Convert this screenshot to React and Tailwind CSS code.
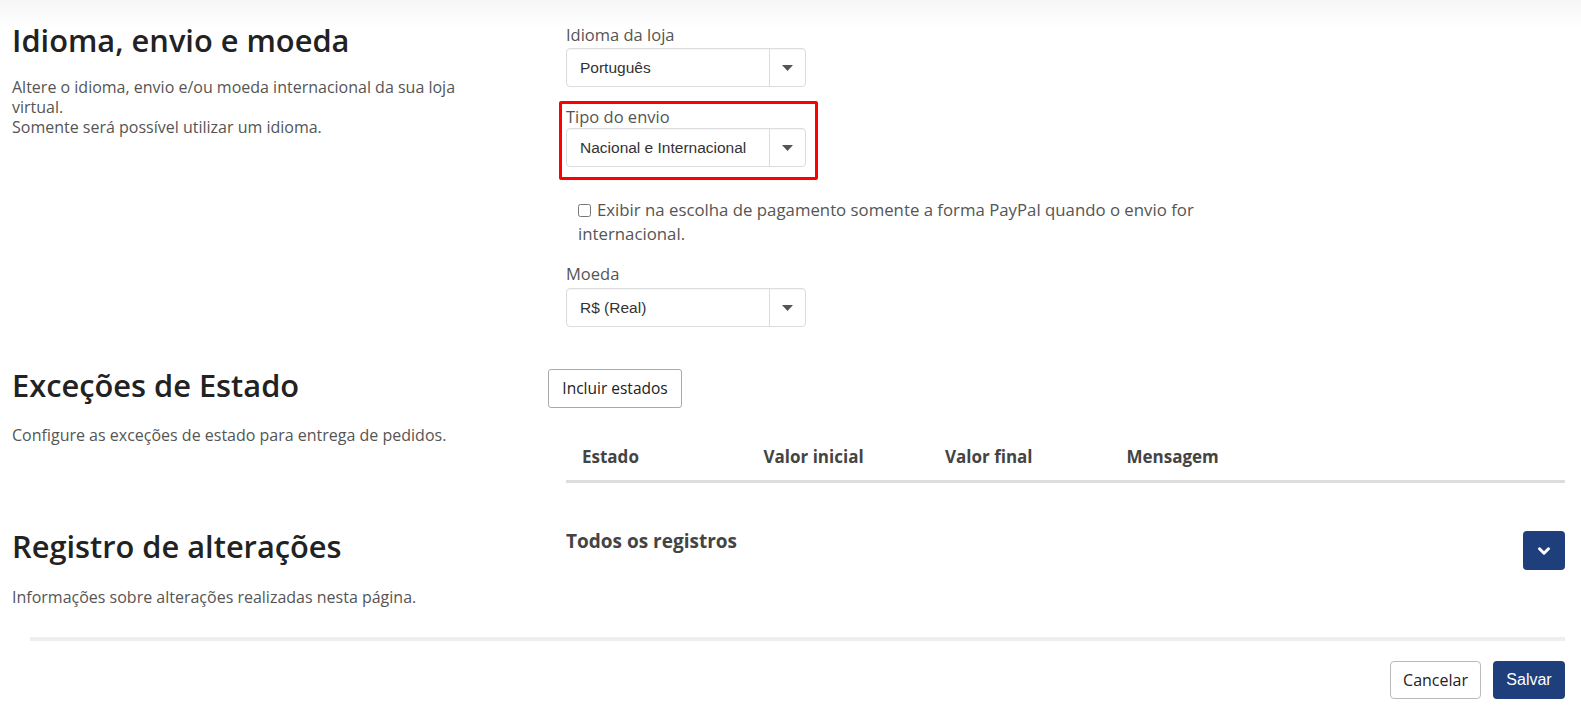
import { ChevronDown } from "lucide-react";

const openSans = "font-['Open_Sans',sans-serif]";
const arial = "font-['Liberation_Sans',Arial,sans-serif]";

function Caret() {
    return (
        <svg width="11" height="6" viewBox="0 0 11 6">
            <path d="M0 0H11L5.5 6Z" fill="#555" />
        </svg>
    );
}

function SelectBox({ value }) {
    return (
        <div className="flex w-[240px] h-[39px] items-stretch rounded-[4px] border border-[#dcdcdc] bg-white shadow-[inset_0_1px_1px_rgba(0,0,0,0.04)]">
            <div className={`flex-1 flex items-center pl-[13px] text-[15.5px] text-[#333] ${arial}`}>{value}</div>
            <div className="w-[36px] border-l border-[#dcdcdc] flex items-center justify-center">
                <Caret />
            </div>
        </div>
    );
}

function Label({ children }) {
    return <div className={`text-[16.5px] leading-[22px] text-[#555] ${openSans}`}>{children}</div>;
}

function SectionIntro({ title, children, gap }) {
    return (
        <div className="w-[554px] shrink-0 pr-[80px]">
            <h2 className={`text-[30.8px] leading-[40px] font-semibold text-[#222] ${openSans}`}>{title}</h2>
            <p className={`text-[16px] leading-[20.2px] text-[#555] ${openSans} ${gap}`}>{children}</p>
        </div>
    );
}

export default function App() {
    return (
        <div className="w-full bg-[linear-gradient(#f6f6f6,#ffffff_28px)] pl-3 pr-[16px] pb-[8px]">
            {/* Idioma, envio e moeda */}
            <section className="flex">
                <div className="pt-[20px] shrink-0">
                    <SectionIntro title="Idioma, envio e moeda" gap="mt-[17px]">
                        Altere o idioma, envio e/ou moeda internacional da sua loja virtual.
                        <br />
                        Somente será possível utilizar um idioma.
                    </SectionIntro>
                </div>
                <div className="flex-1 min-w-0 pt-[24px]">
                    <Label>Idioma da loja</Label>
                    <div className="mt-[2px]">
                        <SelectBox value="Português" />
                    </div>

                    <div className="mt-[14px] -ml-[7px] w-[259px] border-[3px] border-[#ff0000] rounded-[2px] pl-[4px] pt-[2px] pb-[10px]">
                        <Label>Tipo do envio</Label>
                        <SelectBox value="Nacional e Internacional" />
                    </div>

                    <label className={`block mt-[18px] ml-[12px] w-[640px] text-[16.8px] leading-[24px] text-[#555] ${openSans}`}>
                        <input type="checkbox" className="w-[13px] h-[13px] mr-[6px] align-[-1px]" />
                        Exibir na escolha de pagamento somente a forma PayPal quando o envio for internacional.
                    </label>

                    <div className="mt-[17px]">
                        <Label>Moeda</Label>
                        <div className="mt-[3px]">
                            <SelectBox value="R$ (Real)" />
                        </div>
                    </div>
                </div>
            </section>

            {/* Exceções de Estado */}
            <section className="flex mt-[38px]">
                <SectionIntro title="Exceções de Estado" gap="mt-[20px]">
                    Configure as exceções de estado para entrega de pedidos.
                </SectionIntro>
                <div className="flex-1 min-w-0 pt-[4px]">
                    <button className={`-ml-[18px] h-[39px] w-[134px] rounded-[3px] border border-[#aaa] bg-white text-[15.5px] text-[#222] ${openSans}`}>
                        Incluir estados
                    </button>
                    <div className={`mt-[26px] flex border-b-[3px] border-[#ddd] py-[11px] text-[17px] leading-[24px] font-bold text-[#444] ${openSans}`}>
                        <div className="w-[181.5px] px-4">Estado</div>
                        <div className="w-[181.5px] px-4">Valor inicial</div>
                        <div className="w-[181.5px] px-4">Valor final</div>
                        <div className="w-[181.5px] px-4">Mensagem</div>
                    </div>
                </div>
            </section>

            {/* Registro de alterações */}
            <section className="flex mt-[43px]">
                <SectionIntro title="Registro de alterações" gap="mt-[21px]">
                    Informações sobre alterações realizadas nesta página.
                </SectionIntro>
                <div className="flex-1 min-w-0 flex items-start justify-between">
                    <div className={`pt-[2px] text-[19px] leading-[26px] font-bold text-[#444] ${openSans}`}>Todos os registros</div>
                    <button className="mt-[5px] w-[42px] h-[39px] rounded-[4px] bg-[#1e3e7c] flex items-center justify-center text-white">
                        <ChevronDown size={18} strokeWidth={4} />
                    </button>
                </div>
            </section>

            <div className="ml-[18px] mt-[30px] h-[4px] bg-[#eeeeee]" />

            <div className="flex justify-end gap-[12px] mt-[20px]">
                <button className={`h-[38px] w-[91px] rounded-[4px] border border-[#bbb] bg-white text-[16px] text-[#222] ${openSans}`}>
                    Cancelar
                </button>
                <button className={`h-[38px] w-[72px] rounded-[4px] bg-[#1e3e7c] text-[16px] text-white ${arial}`}>
                    Salvar
                </button>
            </div>
        </div>
    );
}
